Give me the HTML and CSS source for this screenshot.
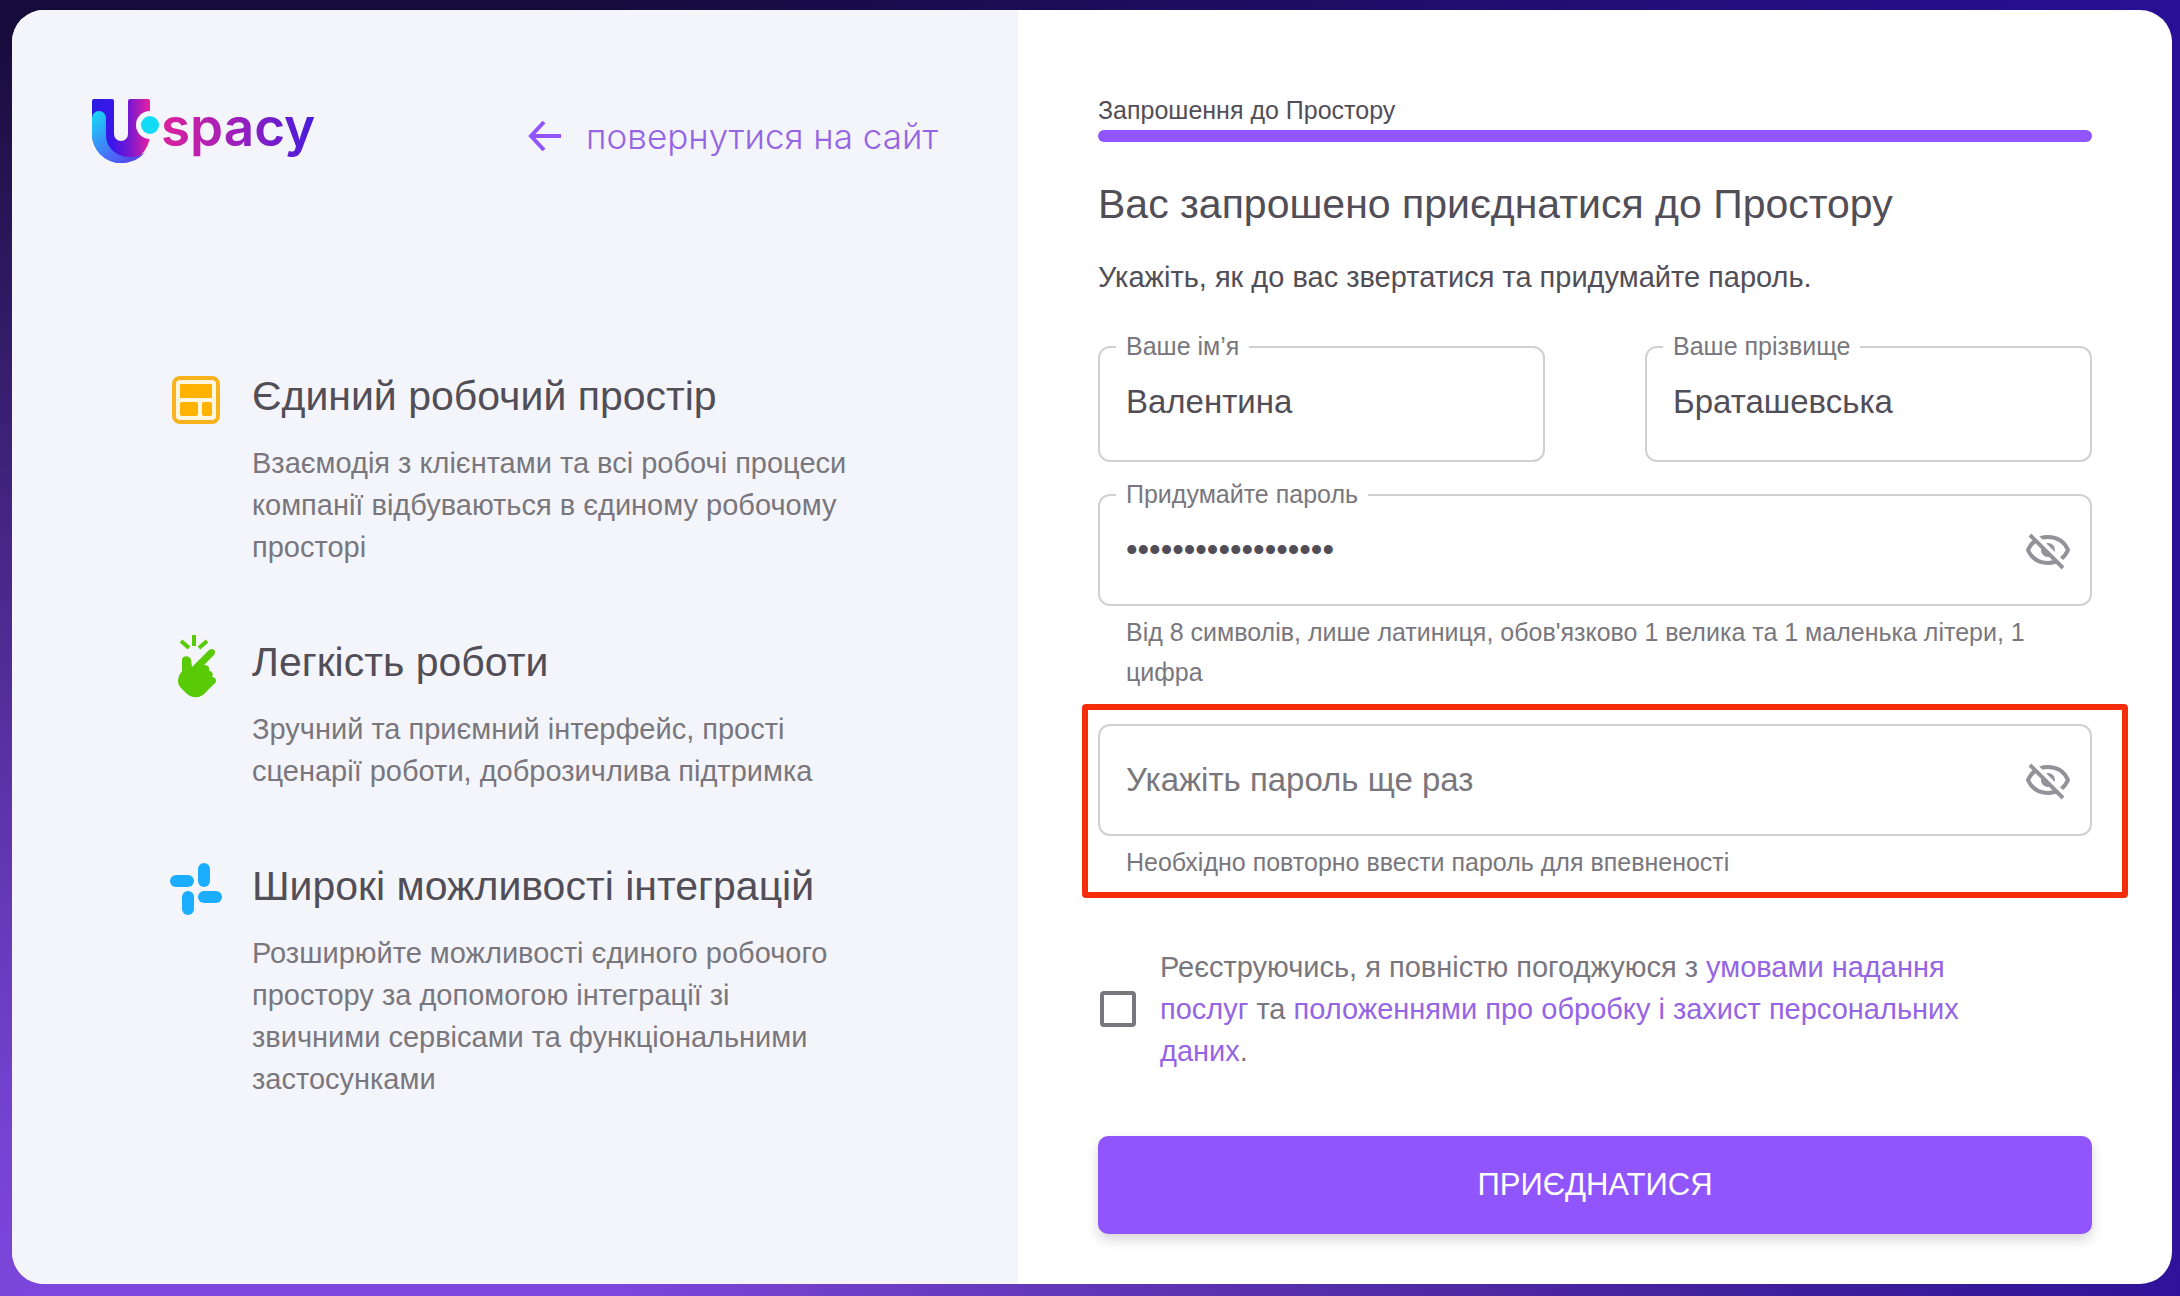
FILE: index.html
```
<!DOCTYPE html>
<html lang="uk">
<head>
    <meta charset="UTF-8">
    <meta name="viewport" content="width=device-width, initial-scale=1.0">
    <title>Uspacy</title>
    <link rel="stylesheet" href="styles.css">
</head>
<body>

    <div class="card">

        <!-- Left side: logo and features -->
        <aside class="info">
            <header class="info-header">
                <svg class="logo" width="228" height="72" viewBox="0 0 228 72" role="img" aria-label="Uspacy">
                    <defs>
                        <linearGradient id="logoU" x1="0" y1="0" x2="1" y2="0">
                            <stop offset="0" stop-color="#2a1ce0"/>
                            <stop offset="0.35" stop-color="#3a16ea"/>
                            <stop offset="0.65" stop-color="#7a18cf"/>
                            <stop offset="1" stop-color="#e81fa0"/>
                        </linearGradient>
                        <linearGradient id="logoSwoosh" x1="0" y1="0" x2="1" y2="1">
                            <stop offset="0" stop-color="#14dcf5"/>
                            <stop offset="0.6" stop-color="#4a6cf8"/>
                            <stop offset="1" stop-color="#5a35e0"/>
                        </linearGradient>
                        <linearGradient id="logoText" x1="0" y1="0" x2="1" y2="0">
                            <stop offset="0" stop-color="#dd219c"/>
                            <stop offset="0.5" stop-color="#9a20bd"/>
                            <stop offset="1" stop-color="#451bdc"/>
                        </linearGradient>
                    </defs>
                    <path fill="url(#logoU)" d="M2 3h18a2 2 0 0 1 2 2v33a7 7 0 0 0 14 0V5a2 2 0 0 1 2-2h18a2 2 0 0 1 2 2v33a29 29 0 0 1-58 0V5a2 2 0 0 1 2-2z"/>
                    <path fill="url(#logoSwoosh)" d="M0 22a7 7 0 0 1 14 0v17c0 14 12 22 24 22 6 0 11-1 15-5-5 7-14 11-24 11-16 0-29-13-29-29z"/>
                    <circle cx="58" cy="29" r="14" fill="#f4f5fb"/>
                    <circle cx="58" cy="29" r="9" fill="#12dcf5"/>
                    <text class="logo-text" x="69" y="50" fill="url(#logoText)">spacy</text>
                </svg>
                <a class="back-link" href="#">
                    <svg width="34" height="34" viewBox="0 0 34 34" aria-hidden="true">
                        <path d="M16 3L3 17l13 14M3 17h30" fill="none" stroke="currentColor" stroke-width="4"/>
                    </svg>
                    повернутися на сайт
                </a>
            </header>

            <ul class="features">
                <li class="feature">
                    <svg class="feature-icon" width="56" height="64" viewBox="0 0 56 64" aria-hidden="true">
                        <rect x="6" y="6" width="44" height="44" rx="6" fill="#fff6e0" stroke="#f7b21c" stroke-width="4"/>
                        <rect x="12" y="12" width="32" height="14" rx="1" fill="#ffb300"/>
                        <rect x="12" y="30" width="18" height="14" rx="2" fill="#ffb300"/>
                        <rect x="34" y="30" width="10" height="14" rx="2" fill="#ffb300"/>
                    </svg>
                    <div>
                        <h2>Єдиний робочий простір</h2>
                        <p>Взаємодія з клієнтами та всі робочі процеси компанії відбуваються в єдиному робочому просторі</p>
                    </div>
                </li>
                <li class="feature">
                    <svg class="feature-icon" width="56" height="64" viewBox="0 0 56 64" aria-hidden="true">
                        <path d="M13 3l8 7M26-3v11M39 3l-8 7" fill="none" stroke="#58cb06" stroke-width="4"/>
                        <path fill="#58cb06" d="M14 22c0-5 8-5 9 0l1 7 17-17c4-3 8 1 5 5L36 27c4 0 6 2 5 6 3 0 5 3 3 6 4 0 5 4 3 6l-8 8c-6 8-15 8-21 2l-5-5c-5-5-3-12 1-17z"/>
                    </svg>
                    <div>
                        <h2>Легкість роботи</h2>
                        <p>Зручний та приємний інтерфейс, прості сценарії роботи, доброзичлива підтримка</p>
                    </div>
                </li>
                <li class="feature">
                    <svg class="feature-icon" width="56" height="64" viewBox="0 0 56 64" aria-hidden="true">
                        <g fill="#1badff">
                            <rect x="2" y="13" width="24" height="12" rx="6"/>
                            <rect x="30" y="1" width="12" height="24" rx="6"/>
                            <rect x="14" y="29" width="12" height="24" rx="6"/>
                            <rect x="30" y="29" width="24" height="12" rx="6"/>
                        </g>
                    </svg>
                    <div>
                        <h2>Широкі можливості інтеграцій</h2>
                        <p>Розширюйте можливості єдиного робочого простору за допомогою інтеграції зі звичними сервісами та функціональними застосунками</p>
                    </div>
                </li>
            </ul>
        </aside>

        <!-- Right side: invitation form -->
        <main class="invite">
            <div class="step">Запрошення до Простору</div>
            <div class="progress"></div>

            <h1>Вас запрошено приєднатися до Простору</h1>
            <p class="subtitle">Укажіть, як до вас звертатися та придумайте пароль.</p>

            <form>
                <div class="name-row">
                    <div class="field">
                        <label for="firstName">Ваше ім’я</label>
                        <input class="name-input" type="text" id="firstName" value="Валентина">
                    </div>
                    <div class="field">
                        <label for="lastName">Ваше прізвище</label>
                        <input class="name-input" type="text" id="lastName" value="Браташевська">
                    </div>
                </div>

                <div class="field-group">
                    <div class="field">
                        <label for="password">Придумайте пароль</label>
                        <input class="password-input" type="password" id="password" value="Uspacy2023Password">
                        <button class="eye" type="button" aria-label="Показати пароль">
                            <svg width="48" height="48" viewBox="0 0 48 48">
                                <path d="M4 22C8 13 15 9 24 9s16 4 20 13c-4 9-11 13-20 13S8 31 4 22z" fill="none" stroke="#939298" stroke-width="4"/>
                                <circle cx="24" cy="22" r="7" fill="#939298"/>
                                <path d="M9 5l34 34" stroke="#fff" stroke-width="4"/>
                                <path d="M6 7l33 33" stroke="#939298" stroke-width="4"/>
                            </svg>
                        </button>
                    </div>
                    <p class="helper">Від 8 символів, лише латиниця, обов'язково 1 велика та 1 маленька літери, 1 цифра</p>
                </div>

                <div class="field-group highlighted">
                    <div class="field">
                        <input class="password-input" type="password" id="passwordRepeat" placeholder="Укажіть пароль ще раз" aria-label="Укажіть пароль ще раз">
                        <button class="eye" type="button" aria-label="Показати пароль">
                            <svg width="48" height="48" viewBox="0 0 48 48">
                                <path d="M4 22C8 13 15 9 24 9s16 4 20 13c-4 9-11 13-20 13S8 31 4 22z" fill="none" stroke="#939298" stroke-width="4"/>
                                <circle cx="24" cy="22" r="7" fill="#939298"/>
                                <path d="M9 5l34 34" stroke="#fff" stroke-width="4"/>
                                <path d="M6 7l33 33" stroke="#939298" stroke-width="4"/>
                            </svg>
                        </button>
                    </div>
                    <p class="helper">Необхідно повторно ввести пароль для впевненості</p>
                </div>

                <div class="agreement">
                    <input type="checkbox" id="agree">
                    <label for="agree">Реєструючись, я повністю погоджуюся з <a href="#">умовами надання послуг</a> та <a href="#">положеннями про обробку і захист персональних даних</a>.</label>
                </div>

                <button class="submit" type="submit">ПРИЄДНАТИСЯ</button>
            </form>
        </main>

    </div>

</body>
</html>
```
FILE: styles.css
```
* {
    box-sizing: border-box;
}

body {
    margin: 0;
    min-height: 100vh;
    padding: 10px 8px 12px 12px;
    display: flex;
    font-family: "Liberation Sans", Arial, sans-serif;
    font-size: 29px;
    line-height: 42px;
    color: #79777d;
    background: radial-gradient(ellipse 90% 100% at 15% 100%, #7c46dc 15%, transparent), linear-gradient(to right, #160b3a, #160b3a 25%, #290f96);
}

h1, h2, p, ul {
    margin: 0;
    padding: 0;
}

h1, h2 {
    font-size: 41px;
    line-height: 48px;
    font-weight: normal;
    color: #524e57;
}

a {
    color: #9565e4;
    text-decoration: none;
}

.card {
    flex: 1;
    display: grid;
    grid-template-columns: 1006fr 1154fr;
    border-radius: 32px;
    overflow: hidden;
    background-color: #fff;
}

/* Left side */
.info {
    background-color: #f4f5fb;
    padding: 86px 80px 40px;
}

.info-header {
    display: flex;
    justify-content: space-between;
    align-items: center;
}

.logo-text {
    font-family: Inter, sans-serif;
    font-size: 53px;
    font-weight: 600;
}

.back-link {
    display: flex;
    align-items: center;
    gap: 24px;
    margin-top: 8px;
    font-family: Inter, sans-serif;
    font-size: 35px;
    font-weight: 300;
}

.back-link svg {
    color: #9155fd;
}

.features {
    list-style: none;
    padding: 204px 84px 0 76px;
    display: flex;
    flex-direction: column;
    gap: 70px;
}

.feature {
    display: flex;
    gap: 28px;
}

.feature-icon {
    flex-shrink: 0;
    overflow: visible;
}

.feature p {
    margin-top: 22px;
}

/* Right side */
.invite {
    padding: 80px 80px 40px;
}

.step {
    font-size: 25px;
    line-height: 40px;
    color: #524e57;
}

.progress {
    height: 12px;
    border-radius: 6px;
    background-color: #9155fd;
}

.invite h1 {
    margin-top: 38px;
}

.subtitle {
    margin-top: 28px;
    color: #524e57;
}

.name-row {
    display: grid;
    grid-template-columns: 1fr 1fr;
    gap: 100px;
    margin: 48px 0 32px;
}

.field {
    position: relative;
}

/* label sits on the top border of the input */
.field label {
    position: absolute;
    top: -20px;
    left: 18px;
    padding: 0 10px;
    font-size: 25px;
    line-height: 40px;
    background-color: #fff;
}

.field input {
    display: block;
    width: 100%;
    padding: 0 26px;
    border: 2px solid #d1d0d3;
    border-radius: 12px;
    font-family: inherit;
    font-size: 33px;
    color: #524e57;
    background-color: #fff;
}

.field input::placeholder {
    color: #79777d;
    opacity: 1;
}

.field .name-input {
    height: 116px;
    padding-bottom: 4px;
}

.field .password-input {
    height: 112px;
    padding-right: 90px;
}

.eye {
    position: absolute;
    top: 34px;
    right: 20px;
    width: 48px;
    height: 48px;
    padding: 0;
    border: none;
    background: none;
    cursor: pointer;
}

.helper {
    margin-top: 6px;
    padding: 0 28px;
    font-size: 25px;
    line-height: 40px;
}

.highlighted {
    position: relative;
    margin-top: 32px;
}

.highlighted::after {
    content: "";
    position: absolute;
    top: -20px;
    right: -36px;
    bottom: -16px;
    left: -16px;
    border: 6px solid #f62d0a;
    border-radius: 4px;
    pointer-events: none;
}

.agreement {
    display: flex;
    align-items: center;
    gap: 24px;
    margin-top: 64px;
    padding-right: 100px;
}

.agreement input {
    flex-shrink: 0;
    appearance: none;
    width: 36px;
    height: 36px;
    margin: 0 0 0 2px;
    border: 4px solid #79777d;
    border-radius: 4px;
}

.agreement input:checked {
    background-color: #9155fd;
}

.submit {
    width: 100%;
    height: 98px;
    margin-top: 64px;
    border: none;
    border-radius: 10px;
    background-color: #9155fd;
    color: #fff;
    font-family: inherit;
    font-size: 31px;
    box-shadow: 0 6px 12px rgba(60, 50, 70, 0.2);
    cursor: pointer;
}
```
